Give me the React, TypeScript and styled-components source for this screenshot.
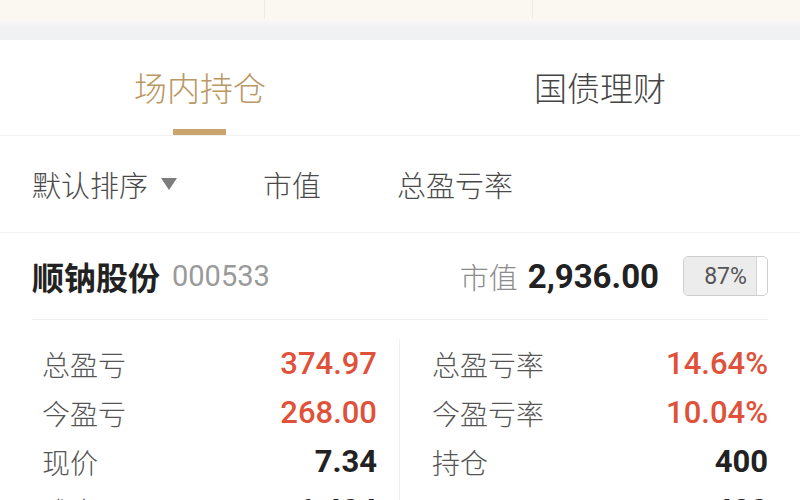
import React from "react"
import styled, { createGlobalStyle } from "styled-components"

const GlobalStyle = createGlobalStyle`
  html, body {
    margin: 0;
    padding: 0;
    background: #ffffff;
    font-family: Roboto, "Noto Sans CJK SC", sans-serif;
  }
  body {
    width: 800px;
    height: 500px;
    overflow: hidden;
  }
`

const Page = styled.div`
  width: 800px;
  height: 500px;
  overflow: hidden;
  background: #fff;
`

const TopStrip = styled.div`
  display: grid;
  grid-template-columns: 265px 268px 1fr;
  height: 19px;
  background: #fbf7f1;
`

const TopCell = styled.div<{ $last?: boolean }>`
  border-right: ${p => (p.$last ? "none" : "1.5px solid #f1eadf")};
`

const Gap = styled.div`
  height: 21px;
  background: linear-gradient(#fbf9f6 0px, #f1f1f3 8px, #f0f1f3 100%);
`

const Tabs = styled.div`
  display: grid;
  grid-template-columns: 1fr 1fr;
  height: 95px;
  border-bottom: 1.5px solid #f1f1f1;
`

const Tab = styled.div<{ $active?: boolean }>`
  position: relative;
  display: flex;
  align-items: center;
  justify-content: center;
  padding-bottom: 2px;
  font-family: "Noto Sans CJK SC", sans-serif;
  font-size: 33px;
  font-weight: 300;
  color: ${p => (p.$active ? "#bb9763" : "#454545")};

  &::after {
    content: "";
    display: ${p => (p.$active ? "block" : "none")};
    position: absolute;
    bottom: 0;
    left: 50%;
    width: 53px;
    height: 6px;
    margin-left: -27px;
    background: #c9a46c;
  }
`

const SortBar = styled.div`
  display: flex;
  align-items: center;
  height: 96px;
  padding: 0 32px;
  border-bottom: 1.5px solid #f1f1f1;
  font-family: "Noto Sans CJK SC", sans-serif;
  font-size: 29px;
  font-weight: 300;
  color: #4a4a4a;
`

const SortItem = styled.div<{ $width?: number }>`
  display: flex;
  align-items: center;
  width: ${p => (p.$width ? `${p.$width}px` : "auto")};
`

const Caret = styled.span`
  width: 0;
  height: 0;
  margin-left: 13px;
  border-left: 8.5px solid transparent;
  border-right: 8.5px solid transparent;
  border-top: 12px solid #7d7d7d;
`

const Stock = styled.div`
  padding: 0 32px;
`

const StockHead = styled.div`
  display: flex;
  align-items: center;
  height: 86px;
  border-bottom: 1.5px solid #eeeeee;
`

const Name = styled.span`
  font-family: "Noto Sans CJK SC", sans-serif;
  font-weight: 700;
  font-size: 32px;
  color: #222;
`

const Code = styled.span`
  margin-left: 12px;
  font-size: 29px;
  color: #9a9a9a;
`

const Spacer = styled.div`
  flex: 1;
`

const ValueLabel = styled.span`
  font-family: "Noto Sans CJK SC", sans-serif;
  font-size: 29px;
  font-weight: 300;
  color: #8c8c8c;
`

const ValueNum = styled.span`
  margin-left: 10px;
  font-size: 33px;
  font-weight: 700;
  color: #222;
`

const Badge = styled.div`
  position: relative;
  width: 85px;
  height: 40px;
  margin-left: 24px;
  box-sizing: border-box;
  border: 1.5px solid #cfcfcf;
  border-radius: 5px;
  overflow: hidden;
  background: #fff;
  display: flex;
  align-items: center;
  justify-content: center;
`

const BadgeFill = styled.div`
  position: absolute;
  left: 0;
  top: 0;
  bottom: 0;
  background: #ececec;
  border-right: 1.5px solid #d6d6d6;
`

const BadgeText = styled.span`
  position: relative;
  font-size: 23px;
  color: #555;
`

const Grid = styled.div`
  display: grid;
  grid-template-columns: 1fr 1fr;
  padding-top: 19px;
`

const Column = styled.div<{ $left?: boolean }>`
  padding: ${p => (p.$left ? "0 22px 0 10px" : "0 0 0 32px")};
  border-right: ${p => (p.$left ? "1.5px solid #efefef" : "none")};
`

const Row = styled.div`
  display: flex;
  align-items: center;
  justify-content: space-between;
  height: 49px;
`

const Label = styled.span`
  font-family: "Noto Sans CJK SC", sans-serif;
  font-size: 28px;
  font-weight: 300;
  color: #555;
`

const Num = styled.span<{ $red?: boolean }>`
  font-size: 31px;
  font-weight: ${p => (p.$red ? 500 : 700)};
  color: ${p => (p.$red ? "#e0513a" : "#222")};
`

type Cell = { label: string; value: string; red?: boolean }

const leftCells: Cell[] = [
  { label: "总盈亏", value: "374.97", red: true },
  { label: "今盈亏", value: "268.00", red: true },
  { label: "现价", value: "7.34" },
  { label: "成本", value: "6.404" },
]

const rightCells: Cell[] = [
  { label: "总盈亏率", value: "14.64%", red: true },
  { label: "今盈亏率", value: "10.04%", red: true },
  { label: "持仓", value: "400" },
  { label: "可用", value: "400" },
]

const App = () => {
  const ratio = 87
  return (
    <Page>
      <GlobalStyle />
      <TopStrip>
        <TopCell />
        <TopCell />
        <TopCell $last />
      </TopStrip>
      <Gap />
      <Tabs>
        <Tab $active>场内持仓</Tab>
        <Tab>国债理财</Tab>
      </Tabs>
      <SortBar>
        <SortItem $width={231}>
          默认排序
          <Caret />
        </SortItem>
        <SortItem $width={134}>市值</SortItem>
        <SortItem>总盈亏率</SortItem>
      </SortBar>
      <Stock>
        <StockHead>
          <Name>顺钠股份</Name>
          <Code>000533</Code>
          <Spacer />
          <ValueLabel>市值</ValueLabel>
          <ValueNum>2,936.00</ValueNum>
          <Badge>
            <BadgeFill style={{ width: `${ratio}%` }} />
            <BadgeText>{ratio}%</BadgeText>
          </Badge>
        </StockHead>
        <Grid>
          <Column $left>
            {leftCells.map(c => (
              <Row key={c.label}>
                <Label>{c.label}</Label>
                <Num $red={c.red}>{c.value}</Num>
              </Row>
            ))}
          </Column>
          <Column>
            {rightCells.map(c => (
              <Row key={c.label}>
                <Label>{c.label}</Label>
                <Num $red={c.red}>{c.value}</Num>
              </Row>
            ))}
          </Column>
        </Grid>
      </Stock>
    </Page>
  )
}

export default App
